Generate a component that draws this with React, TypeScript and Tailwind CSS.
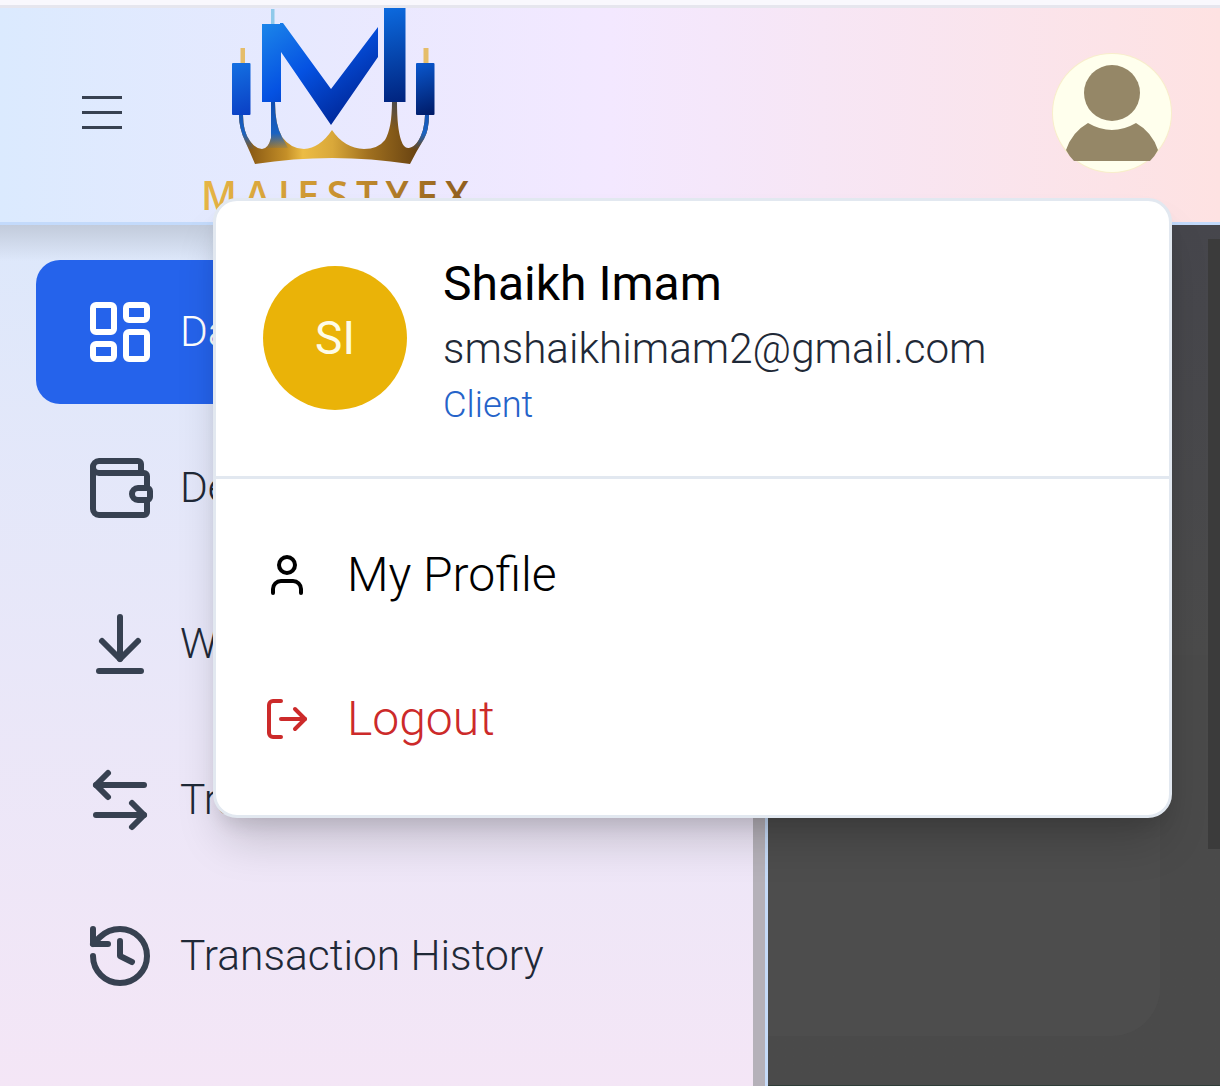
import { LayoutDashboard, Wallet, ArrowDownToLine, ArrowLeftRight, History, User, LogOut } from "lucide-react";

const nav = [
  { label: "Dashboard", Icon: LayoutDashboard, active: true },
  { label: "Deposit", Icon: Wallet, active: false },
  { label: "Withdraw", Icon: ArrowDownToLine, active: false },
  { label: "Transfer", Icon: ArrowLeftRight, active: false },
  { label: "Transaction History", Icon: History, active: false },
];

function Logo() {
  return (
    <svg width="280" height="214" viewBox="200 8 280 214" className="shrink-0">
      <defs>
        <linearGradient id="blueA" gradientUnits="userSpaceOnUse" x1="262" y1="23" x2="335" y2="125">
          <stop offset="0" stopColor="#1c86ea" />
          <stop offset="0.5" stopColor="#0552e2" />
          <stop offset="1" stopColor="#00289a" />
        </linearGradient>
        <linearGradient id="blueS" gradientUnits="userSpaceOnUse" x1="232" y1="63" x2="250" y2="115">
          <stop offset="0" stopColor="#1470e2" />
          <stop offset="1" stopColor="#0a3fc4" />
        </linearGradient>
        <linearGradient id="blueR" gradientUnits="userSpaceOnUse" x1="384" y1="8" x2="405" y2="102">
          <stop offset="0" stopColor="#0c6adf" />
          <stop offset="1" stopColor="#00237e" />
        </linearGradient>
        <linearGradient id="blueT" gradientUnits="userSpaceOnUse" x1="416" y1="63" x2="434" y2="115">
          <stop offset="0" stopColor="#0a58cf" />
          <stop offset="1" stopColor="#001a66" />
        </linearGradient>
        <linearGradient id="crown" gradientUnits="userSpaceOnUse" x1="250" y1="0" x2="415" y2="0">
          <stop offset="0" stopColor="#8a5a14" />
          <stop offset="0.22" stopColor="#c48f28" />
          <stop offset="0.32" stopColor="#ecbc44" />
          <stop offset="0.5" stopColor="#d9a83a" />
          <stop offset="0.72" stopColor="#a0701f" />
          <stop offset="1" stopColor="#6b4512" />
        </linearGradient>
        <linearGradient id="stemBlue" gradientUnits="userSpaceOnUse" x1="0" y1="102" x2="0" y2="150">
          <stop offset="0" stopColor="#0f4cae" />
          <stop offset="0.65" stopColor="#1a62c2" />
          <stop offset="1" stopColor="#1a62c2" stopOpacity="0" />
        </linearGradient>
        <linearGradient id="stemDark" gradientUnits="userSpaceOnUse" x1="0" y1="102" x2="0" y2="130">
          <stop offset="0" stopColor="#4d4a4a" />
          <stop offset="1" stopColor="#4d4a4a" stopOpacity="0" />
        </linearGradient>
        <linearGradient id="word" gradientUnits="userSpaceOnUse" x1="205" y1="181" x2="470" y2="215">
          <stop offset="0" stopColor="#e6b545" />
          <stop offset="0.5" stopColor="#c9922f" />
          <stop offset="1" stopColor="#8d5c1e" />
        </linearGradient>
      </defs>
      <rect x="240.5" y="48" width="4.5" height="15" fill="#e5bd6a" />
      <rect x="271" y="9" width="3.5" height="16" fill="#8fc9ea" />
      <rect x="423.5" y="48" width="5" height="15" fill="#e5bd6a" />
      <path
        d="M239 115 L243 115 Q243 132 250 141 Q256 149 262 149 Q268 149 271 138 L271 102 L275 102 Q275 125 282 137 Q291 149 304 149 Q320 148 332 130 Q344 148 364 149 Q378 149 385 140 Q392 128 392 102 L397 102 Q397 128 401 140 Q404 149 409 148 Q418 146 423 130 Q425 122 425 115 L429 115 Q429 130 424 139 Q416 152 410 164 Q332 152 255 164 Q250 152 245 141 Q239 128 239 115 Z"
        fill="url(#crown)"
      />
      <path d="M239 115 L243 115 Q243 132 250 141 L255 150 L249 150 L245 141 Q239 128 239 115 Z" fill="url(#stemBlue)" />
      <path d="M271 102 L275 102 Q275 125 282 137 L288 148 L266 148 Q269 146 271 138 Z" fill="url(#stemBlue)" />
      <path d="M425 115 L429 115 Q429 130 424 139 L417 150 L411 148 Q418 146 423 130 Q425 122 425 115 Z" fill="url(#stemBlue)" />
      <path d="M392 102 L397 102 L397 130 L391 130 Q392 118 392 102 Z" fill="url(#stemDark)" />
      <rect x="232" y="63" width="18.5" height="52" rx="1" fill="url(#blueS)" />
      <rect x="262" y="24" width="19" height="78" fill="url(#blueA)" />
      <path d="M280 23 L283 23 L331 89 L378 27 L378 57 L331 125 L281 52 Z" fill="url(#blueA)" />
      <rect x="384" y="8" width="21.5" height="94" fill="url(#blueR)" />
      <rect x="416" y="63" width="18.5" height="52" rx="1" fill="url(#blueT)" />
      <text
        x="201"
        y="210"
        fill="url(#word)"
        fontFamily="'Open Sans', sans-serif"
        fontWeight="600"
        fontSize="39"
        textLength="268"
        lengthAdjust="spacing"
      >
        MAJESTYFX
      </text>
    </svg>
  );
}

function UserAvatar() {
  return (
    <svg width="120" height="120" viewBox="0 0 120 120" className="shrink-0">
      <circle cx="60" cy="60" r="60" fill="#f8eecb" />
      <circle cx="60" cy="60" r="59" fill="#ffffed" />
      <circle cx="60" cy="40" r="28" fill="#958767" />
      <path d="M14 97 Q20 79 36 70 Q60 84 84 70 Q100 79 106 97 Q103 103 98 108 L22 108 Q17 103 14 97 Z" fill="#958767" />
    </svg>
  );
}

export default function App() {
  return (
    <div className="relative flex h-[1086px] w-[1220px] flex-col overflow-hidden bg-[#4b4b4b] font-['Roboto',sans-serif]">
      <div className="h-[5px] shrink-0 bg-[#f9f8fd]" />
      <div className="h-[3px] shrink-0 bg-[#e6e6ee]" />
      <header className="z-10 flex h-[217px] shrink-0 items-start overflow-hidden border-b-[3px] border-[#c3dafb] bg-gradient-to-r from-[#dbeafe] via-[#f3e8ff] to-[#fee2e2]">
        <div className="mt-[88px] ml-[82px] flex w-[40px] shrink-0 flex-col gap-[12.5px]">
          <div className="h-[2.5px] bg-[#374151]" />
          <div className="h-[2.5px] bg-[#374151]" />
          <div className="h-[2.5px] bg-[#374151]" />
        </div>
        <div className="ml-[78px]">
          <Logo />
        </div>
        <div className="mt-[45px] mr-[48px] ml-auto">
          <UserAvatar />
        </div>
      </header>

      <div className="flex min-h-0 flex-1">
        <aside className="relative w-[753px] shrink-0 bg-gradient-to-b from-[#dde8fb] to-[#f4e6f6] pt-[35px] pl-[36px]">
          <div className="pointer-events-none absolute inset-x-0 top-0 h-[36px] bg-gradient-to-b from-[#c2cbdb] to-transparent" />
          <nav className="relative flex flex-col gap-[12px]">
            {nav.map(({ label, Icon, active }) => (
              <div
                key={label}
                className={
                  active
                    ? "flex h-[144px] w-[660px] items-center gap-[24px] rounded-[24px] bg-[#2563eb] pl-[48px] text-white"
                    : "flex h-[144px] w-[660px] items-center gap-[24px] rounded-[24px] pl-[48px] text-[#1f2937]"
                }
              >
                <Icon size={72} strokeWidth={2} className={active ? "shrink-0 text-white" : "shrink-0 text-[#374151]"} />
                <span className="text-[42.5px] font-light whitespace-nowrap">{label}</span>
              </div>
            ))}
          </nav>
        </aside>
        <div className="w-[12px] shrink-0 bg-[#b5b1b9]" />
        <div className="w-[3px] shrink-0 bg-[#c6dbf8]" />
        <main className="relative flex min-w-0 flex-1 items-start justify-between bg-gradient-to-b from-[#46464c] via-[#4b4b4b] to-[#4a4a4a] to-[30%]">
          <div className="h-[811px] w-[392px] rounded-br-[48px] bg-[#4d4d4d]" />
          <div className="mt-[14px] h-[610px] w-[12px] bg-[#3b3b3b]" />
          <div className="absolute inset-x-0 bottom-0 h-px bg-[#2f3d38]" />
        </main>
      </div>

      <div className="absolute top-[198px] left-[213px] z-20 flex h-[620px] w-[959px] flex-col rounded-[24px] border-[3px] border-[#e2e8f0] bg-white shadow-[0_30px_45px_-9px_rgba(0,0,0,0.18),0_12px_18px_-6px_rgba(0,0,0,0.1)]">
        <div className="flex h-[278px] shrink-0 items-center gap-[36px] border-b-[3px] border-[#e2e8f0] pb-[1px] pl-[47px]">
          <div className="flex h-[144px] w-[144px] shrink-0 items-center justify-center rounded-full bg-[#eab308] text-[46px] font-normal text-[#fefce8]">
            SI
          </div>
          <div className="flex flex-col pt-[4px]">
            <div className="h-[62px] text-[48px] leading-[58px] font-normal text-black">Shaikh Imam</div>
            <div className="h-[60px] text-[42.2px] leading-[64px] font-light text-[#1f2937]">smshaikhimam2@gmail.com</div>
            <div className="h-[48px] text-[36.3px] leading-[56px] font-light text-[#2563c9]">Client</div>
          </div>
        </div>
        <div className="pt-[24px] pl-[47px]">
          <div className="flex h-[144px] items-center gap-[36px] text-black">
            <User size={48} strokeWidth={2} className="shrink-0" />
            <span className="text-[48px] font-light">My Profile</span>
          </div>
          <div className="flex h-[144px] items-center gap-[36px] text-[#cc2a2a]">
            <LogOut size={48} strokeWidth={2} className="shrink-0" />
            <span className="text-[48px] font-light">Logout</span>
          </div>
        </div>
      </div>
    </div>
  );
}
